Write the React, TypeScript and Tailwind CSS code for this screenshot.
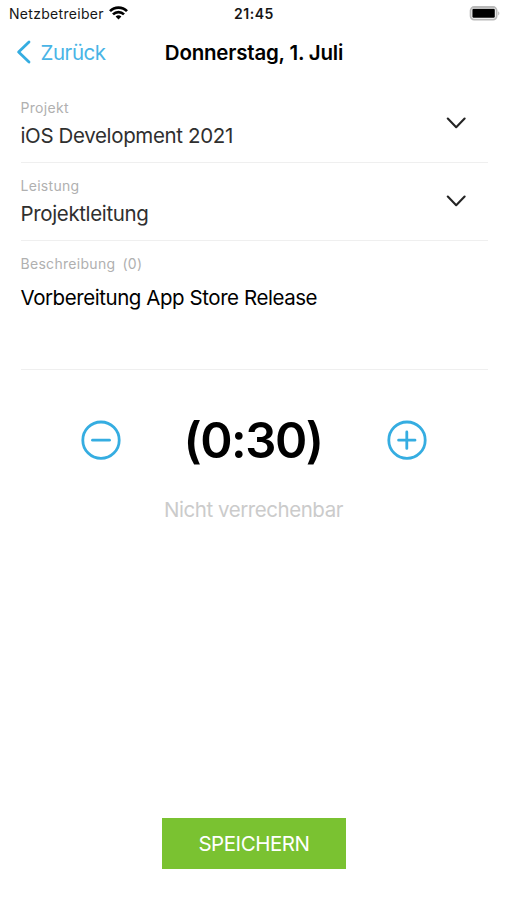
import type { ReactNode } from 'react';

const ACCENT = '#35ade1';

function StatusBar() {
  return (
    <div className="grid h-[27px] grid-cols-3 items-center pr-[7px] pl-[9px] text-[14px] text-[#161616]">
      <div className="flex items-center gap-[5px]">
        <span className="tracking-[0.3px]">Netzbetreiber</span>
        <svg className="-mt-px" width="19" height="14" viewBox="0 0 19 14" fill="none" stroke="#000" strokeWidth="2.7">
          <path d="M1 5.1a12 12 0 0 1 17 0" />
          <path d="M4 8.4a7.8 7.8 0 0 1 11 0" />
          <path d="M9.5 13.4 6.6 10.6a4.1 4.1 0 0 1 5.8 0Z" fill="#000" stroke="none" />
        </svg>
      </div>
      <span className="pr-px text-center font-semibold tracking-[0.5px]">21:45</span>
      <svg className="justify-self-end" width="31" height="15" viewBox="0 0 31 15">
        <rect x="1.6" y="1" width="26" height="12.6" rx="3.5" fill="#fff" stroke="#b9b9b9" strokeWidth="1.8" />
        <rect x="3.4" y="2.8" width="22.4" height="9" rx="1.2" fill="#000" />
        <path d="M29.2 5.2c1.6.8 1.6 3.4 0 4.2Z" fill="#b9b9b9" />
      </svg>
    </div>
  );
}

function Field({ label, children }: { label: string; children: ReactNode }) {
  return (
    <div className="flex h-[78.5px] items-center justify-between border-b-[1.5px] border-[#efefef] pr-[22px]">
      <div className="pt-[3px]">
        <div className="h-[21px] text-[14px] leading-[21px] tracking-[0.3px] text-[#b0b0b0]">{label}</div>
        <div className="h-[34px] text-[20.5px] leading-[35px] tracking-[-0.36px] whitespace-nowrap text-[#2f2f2f]">{children}</div>
      </div>
      <svg width="20" height="12" viewBox="0 0 20 12" fill="none" stroke="#242424" strokeWidth="2.1" strokeLinecap="round" strokeLinejoin="round">
        <path d="m1.8 1.6 8.4 8.6 8.4-8.6" />
      </svg>
    </div>
  );
}

function RoundButton({ label, path }: { label: string; path: string }) {
  return (
    <button aria-label={label}>
      <svg width="40" height="40" viewBox="0 0 40 40" fill="none" stroke={ACCENT} strokeWidth="2.8" strokeLinecap="round">
        <circle cx="20" cy="20.2" r="18.2" />
        <path d={path} />
      </svg>
    </button>
  );
}

export default function App() {
  return (
    <div className="flex h-[900px] w-[507px] flex-col bg-white font-['Inter',sans-serif] text-black">
      <StatusBar />

      <header className="grid h-[51px] grid-cols-[1fr_auto_1fr] items-center pr-[15px] pl-[16px]">
        <button className="flex items-center gap-[8.5px] text-[20.5px] tracking-[-0.45px] text-[#49b4e6]">
          <svg className="-mt-px" width="16" height="24" viewBox="0 0 16 24" fill="none" stroke={ACCENT} strokeWidth="2.8" strokeLinecap="round" strokeLinejoin="round">
            <path d="M13 2 2.6 12 13 22" />
          </svg>
          <span className="pt-[2px]">Zurück</span>
        </button>
        <h1 className="pt-[2px] text-[20.5px] font-semibold tracking-[-0.2px] whitespace-nowrap">Donnerstag, 1. Juli</h1>
      </header>

      <main className="flex flex-1 flex-col pt-[6px]">
        <div className="mr-[19px] ml-[20.5px]">
          <Field label="Projekt">iOS Development 2021</Field>
          <Field label="Leistung">Projektleitung</Field>
          <div className="h-[129px] border-b-[1.5px] border-[#efefef] pt-[12px]">
            <div className="flex gap-[7px] text-[14px] leading-[21px] tracking-[0.3px] text-[#b0b0b0]">
              <span>Beschreibung</span>
              <span>(0)</span>
            </div>
            <p className="pt-[7px] text-[20.5px] leading-[34px] tracking-[-0.44px] whitespace-nowrap">
              Vorbereitung App Store Release
            </p>
          </div>
        </div>

        <div className="mt-[40px] flex h-[60px] items-center justify-between pr-[80px] pl-[81px]">
          <RoundButton label="Weniger" path="M11.5 20.2h17" />
          <span className="pt-[2px] pr-[2px] text-[49px] leading-[60px] font-semibold tracking-[-1.5px]">(0:30)</span>
          <RoundButton label="Mehr" path="M11.6 20.2H28M19.8 12v16.4" />
        </div>
        <p className="mt-[25px] text-center text-[20.5px] leading-[30px] tracking-[-0.45px] text-[#cbcbcb]">Nicht verrechenbar</p>

        <button className="mt-auto mb-[31px] ml-[162px] h-[51px] w-[184px] bg-[#7ac231] pt-[2px] text-[20.5px] tracking-[-0.45px] text-white">
          SPEICHERN
        </button>
      </main>
    </div>
  );
}
